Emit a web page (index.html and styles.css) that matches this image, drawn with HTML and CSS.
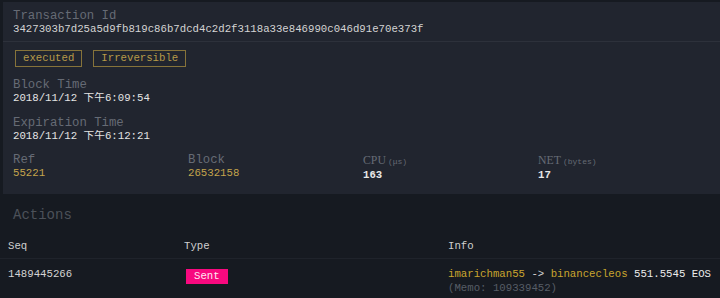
FILE: index.html
```html
<!DOCTYPE html>
<html>
<head>
<meta charset="utf-8">
<link rel="stylesheet" href="styles.css">
</head>
<body>
<div class="card">
  <div class="field">
    <div class="label">Transaction Id</div>
    <div class="value hash">3427303b7d25a5d9fb819c86b7dcd4c2d2f3118a33e846990c046d91e70e373f</div>
  </div>
  <div class="divider"></div>
  <div class="tags">
    <span class="tag">executed</span>
    <span class="tag">Irreversible</span>
  </div>
  <div class="field sec">
    <div class="label">Block Time</div>
    <div class="value">2018/11/12 下午6:09:54</div>
  </div>
  <div class="field sec">
    <div class="label">Expiration Time</div>
    <div class="value">2018/11/12 下午6:12:21</div>
  </div>
  <div class="stats">
    <div class="stat">
      <div class="label">Ref</div>
      <div class="value gold">55221</div>
    </div>
    <div class="stat">
      <div class="label">Block</div>
      <div class="value gold">26532158</div>
    </div>
    <div class="stat">
      <div class="label"><span class="serif">CPU</span><span class="unit">(μs)</span></div>
      <div class="value bold">163</div>
    </div>
    <div class="stat">
      <div class="label"><span class="serif">NET</span><span class="unit">(bytes)</span></div>
      <div class="value bold">17</div>
    </div>
  </div>
</div>
<div class="actions">
  <div class="actions-title">Actions</div>
  <div class="table">
    <div class="row head">
      <div class="cell">Seq</div>
      <div class="cell">Type</div>
      <div class="cell">Info</div>
    </div>
    <div class="row body">
      <div class="cell">1489445266</div>
      <div class="cell"><span class="badge">Sent</span></div>
      <div class="cell">
        <div><span class="acct">imarichman55</span> -&gt; <span class="acct">binancecleos</span> <span class="amt">551.5545 EOS</span></div>
        <div class="memo">(Memo: 109339452)</div>
      </div>
    </div>
  </div>
</div>
</body>
</html>
```

FILE: styles.css
```css
html, body {
  margin: 0;
  padding: 0;
}
body {
  background: #161a21;
  width: 720px;
  height: 298px;
  overflow: hidden;
  font-family: "Liberation Mono", "Noto Sans CJK SC", monospace;
  color: #d6d6d6;
}
.card {
  margin: 2px 0 0 3px;
  background: #21252f;
  padding: 7px 7px 12px 10px;
}
.label {
  font-size: 12.3px;
  line-height: 14px;
  color: #666b75;
  white-space: nowrap;
}
.value {
  font-size: 10.7px;
  line-height: 13px;
  color: #e4e4e4;
  white-space: nowrap;
}
.hash {
  color: #d4d4d4;
}
.divider {
  height: 1px;
  background: #2d313b;
  margin: 5px -7px 8px -10px;
}
.tags {
  display: flex;
  gap: 11px;
  padding-left: 2px;
  height: 17px;
}
.tag {
  border: 1px solid #86733a;
  color: #b79a48;
  font-size: 10.7px;
  line-height: 13px;
  padding: 1px 7px 0;
  height: 14px;
}
.sec {
  margin-top: 11px;
}
.stats {
  margin-top: 10px;
  display: grid;
  grid-template-columns: repeat(4, 1fr);
}
.gold {
  color: #c4a44c;
}
.bold {
  font-weight: bold;
  color: #e8e8e8;
}
.serif {
  font-family: "Liberation Serif", serif;
  font-size: 11.8px;
}
.unit {
  font-size: 8px;
  margin-left: 2px;
}
.actions {
  padding-top: 13px;
}
.actions-title {
  padding-left: 13px;
  font-size: 14px;
  line-height: 16px;
  color: #4c5159;
}
.table {
  margin-top: 9px;
}
.row {
  display: grid;
  grid-template-columns: 176px 264px 1fr;
  font-size: 10.7px;
  line-height: 13px;
}
.row.head {
  color: #cfcfcf;
  border-bottom: 1px solid #1f232b;
}
.row.head .cell {
  padding: 8px 8px 5px;
}
.row.body .cell {
  padding: 9px 8px 0;
  color: #d4d4d4;
}
.badge {
  display: inline-block;
  vertical-align: top;
  margin-top: 1px;
  margin-left: 2px;
  background: #f8097f;
  color: #ffe6f2;
  padding: 1px 8px;
  line-height: 13px;
}
.acct {
  color: #c9a52e;
}
.amt {
  color: #ececec;
}
.memo {
  color: #575d66;
  line-height: 15px;
}
```
